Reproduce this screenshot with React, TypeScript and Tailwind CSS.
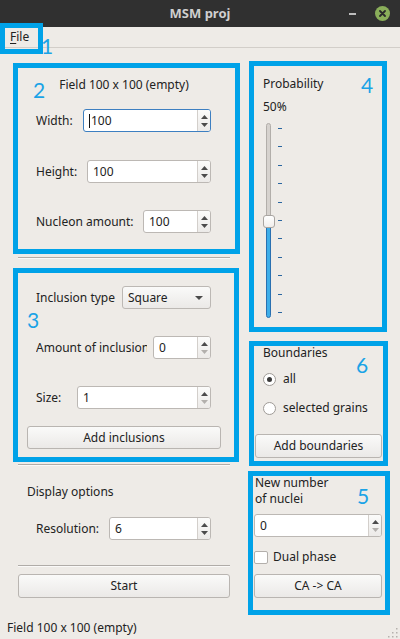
import React from "react";

const FONT = { fontFamily: '"Noto Sans", "DejaVu Sans", sans-serif' };

function Arrows({ downDisabled }: { downDisabled?: boolean }) {
  return (
    <div className="flex w-[13px] flex-col items-center justify-center gap-[4px] border-l border-[#d3cfcb] bg-gradient-to-b from-[#fbfbfa] to-[#eceae8] rounded-r-[2px]">
      <svg width="7" height="4" viewBox="0 0 7 4">
        <polygon points="0,4 3.5,0 7,4" fill="#4b4b4b" />
      </svg>
      <svg width="7" height="4" viewBox="0 0 7 4">
        <polygon points="0,0 7,0 3.5,4" fill={downDisabled ? "#b3b0ad" : "#4b4b4b"} />
      </svg>
    </div>
  );
}

function Spin({
  value,
  w,
  focused,
  downDisabled,
}: {
  value: string;
  w: string;
  focused?: boolean;
  downDisabled?: boolean;
}) {
  return (
    <div
      className={`flex h-[23px] ${w} shrink-0 rounded-[3px] border bg-white ${
        focused ? "border-[#3d7fc1]" : "border-[#bcb8b4]"
      }`}
    >
      <div className="flex flex-1 items-center pl-[5px] text-[12px] text-[#222]">
        {focused && <div className="mr-[1px] h-[14px] w-[1px] bg-[#111]" />}
        {value}
      </div>
      <Arrows downDisabled={downDisabled} />
    </div>
  );
}

function Button({ label, cls }: { label: string; cls: string }) {
  return (
    <div
      className={`flex items-center justify-center rounded-[3px] border border-[#b9b5b1] bg-gradient-to-b from-[#fafaf9] to-[#ebe9e7] text-[12px] text-[#222] ${cls}`}
    >
      {label}
    </div>
  );
}

function Sep({ cls }: { cls: string }) {
  return <div className={`h-[2px] border-t border-[#b0aca8] border-b border-b-[#faf9f8] ${cls}`} />;
}

function Box({ cls }: { cls: string }) {
  return <div className={`pointer-events-none absolute border-[5px] border-[#00a2e8] ${cls}`} />;
}

function Digit({ d, cls }: { d: string; cls: string }) {
  return (
    <div
      className={`pointer-events-none absolute text-[21px] leading-none font-normal text-[#1ba3e6] ${cls}`}
      style={{ fontFamily: 'Lato, "Open Sans", sans-serif' }}
    >
      {d}
    </div>
  );
}

export default function App() {
  const ticks = Array.from({ length: 11 }, (_, i) => i);
  return (
    <div
      className="relative flex h-[639px] w-[400px] flex-col overflow-hidden bg-[#eeebe7] text-[12px] text-[#222]"
      style={FONT}
    >
      {/* Title bar */}
      <div className="relative flex h-[27px] shrink-0 items-center justify-center bg-[#303030]">
        <span className="text-[13px] font-bold text-[#cfcfcf]">MSM proj</span>
        <div className="absolute right-[10px] top-0 flex h-[27px] items-center gap-[19px]">
          <div className="h-[2px] w-[7px] bg-[#bdbdbd]" />
          <div className="flex h-[15px] w-[15px] items-center justify-center rounded-full bg-[#8aae5a]">
            <svg width="7" height="7" viewBox="0 0 7 7">
              <path d="M1 1 L6 6 M6 1 L1 6" stroke="#2a2a2a" strokeWidth="1.8" strokeLinecap="round" />
            </svg>
          </div>
        </div>
      </div>

      {/* Menu bar */}
      <div className="flex h-[21px] shrink-0 items-center border-b border-[#d2cec9] pl-[10px]">
        <span>
          <span className="underline underline-offset-2">F</span>ile
        </span>
      </div>

      {/* Main */}
      <div className="flex flex-1">
        {/* Left column */}
        <div className="ml-[18px] flex w-[212px] flex-col">
          <div className="mt-[29px] flex h-[16px] items-center justify-center">Field 100 x 100 (empty)</div>
          <div className="mt-[16px] flex items-center pl-[18px] pr-[19px]">
            <span>Width:</span>
            <div className="ml-auto">
              <Spin value="100" w="w-[128px]" focused />
            </div>
          </div>
          <div className="mt-[28px] flex items-center pl-[18px] pr-[19px]">
            <span>Height:</span>
            <div className="ml-auto">
              <Spin value="100" w="w-[124px]" />
            </div>
          </div>
          <div className="mt-[27px] flex items-center pl-[18px] pr-[19px]">
            <span>Nucleon amount:</span>
            <div className="ml-auto">
              <Spin value="100" w="w-[68px]" />
            </div>
          </div>
          <Sep cls="mt-[24px]" />
          <div className="mt-[27px] flex items-center pl-[18px] pr-[19px]">
            <span>Inclusion type</span>
            <div className="ml-auto flex h-[23px] w-[89px] items-center rounded-[3px] border border-[#bcb8b4] bg-gradient-to-b from-[#fafaf9] to-[#ebe9e7] pl-[5px] pr-[7px]">
              <span>Square</span>
              <svg className="ml-auto" width="8" height="4" viewBox="0 0 8 4">
                <polygon points="0,0 8,0 4,4" fill="#4b4b4b" />
              </svg>
            </div>
          </div>
          <div className="mt-[27px] flex items-center pl-[18px] pr-[19px]">
            <span className="w-[111px] overflow-hidden whitespace-nowrap">Amount of inclusions</span>
            <div className="ml-auto">
              <Spin value="0" w="w-[58px]" downDisabled />
            </div>
          </div>
          <div className="mt-[27px] flex items-center pl-[18px] pr-[19px]">
            <span>Size:</span>
            <div className="ml-auto">
              <Spin value="1" w="w-[134px]" downDisabled />
            </div>
          </div>
          <div className="mt-[17px] px-[9px]">
            <Button label="Add inclusions" cls="h-[23px]" />
          </div>
          <Sep cls="mt-[15px]" />
          <div className="mt-[18px] flex h-[16px] items-center pl-[9px]">Display options</div>
          <div className="mt-[17px] flex items-center pl-[18px] pr-[19px]">
            <span>Resolution:</span>
            <div className="ml-auto">
              <Spin value="6" w="w-[102px]" />
            </div>
          </div>
          <Sep cls="mt-[25px]" />
          <Button label="Start" cls="mt-[7px] h-[24px]" />
        </div>

        {/* Right column */}
        <div className="ml-[24px] flex w-[128px] flex-col">
          <div className="mt-[28px] flex h-[16px] items-center pl-[9px]">Probability</div>
          <div className="mt-[7px] flex h-[16px] items-center pl-[9px]">50%</div>
          <div className="relative mt-[6px] h-[199px]">
            <div className="absolute left-[12px] top-[2px] h-[93px] w-[5px] rounded-t-[3px] border border-[#b2aeaa] bg-[#d6d2ce]" />
            <div className="absolute left-[12px] top-[100px] h-[97px] w-[5px] rounded-b-[3px] border border-[#2a70b0] bg-[#3daee9]" />
            <div className="absolute left-[9px] top-[94px] h-[13px] w-[12px] rounded-[3px] border border-[#a9a5a1] bg-gradient-to-b from-white to-[#f0eeec]" />
            {ticks.map((i) => (
              <div
                key={i}
                className="absolute left-[24px] h-[1px] w-[4px] bg-[#2a66a0]"
                style={{ top: 7 + i * 18.4 }}
              />
            ))}
          </div>
          <div className="mt-[25px] flex h-[16px] items-center pl-[9px]">Boundaries</div>
          <div className="mt-[10px] flex h-[16px] items-center gap-[7px] pl-[9px]">
            <div className="flex h-[13px] w-[13px] items-center justify-center rounded-full border border-[#9f9b97] bg-white">
              <div className="h-[5px] w-[5px] rounded-full bg-[#3a3a3a]" />
            </div>
            <span>all</span>
          </div>
          <div className="mt-[13px] flex h-[16px] items-center gap-[7px] pl-[9px]">
            <div className="h-[13px] w-[13px] rounded-full border border-[#9f9b97] bg-white" />
            <span>selected grains</span>
          </div>
          <div className="mt-[18px] pl-[1px]">
            <Button label="Add boundaries" cls="h-[24px]" />
          </div>
          <div className="mt-[17px] pl-[1px] leading-[16px]">
            New number
            <br />
            of nuclei
          </div>
          <div className="mt-[7px]">
            <Spin value="0" w="w-[128px]" downDisabled />
          </div>
          <div className="mt-[12px] flex h-[16px] items-center gap-[5px]">
            <div className="h-[13px] w-[14px] rounded-[2px] border border-[#b3afab] bg-white" />
            <span>Dual phase</span>
          </div>
          <Button label="CA -> CA" cls="mt-[9px] h-[24px]" />
        </div>
      </div>

      {/* Status bar */}
      <div className="relative flex h-[22px] shrink-0 items-center pl-[7px]">
        Field 100 x 100 (empty)
        <svg className="absolute bottom-[1px] right-[2px]" width="12" height="12" viewBox="0 0 12 12">
          {[
            [10, 2],
            [10, 6],
            [6, 6],
            [10, 10],
            [6, 10],
            [2, 10],
          ].map(([x, y], i) => (
            <rect key={i} x={x} y={y} width="1.5" height="1.5" fill="#b5b1ad" />
          ))}
        </svg>
      </div>

      {/* Annotation overlays */}
      <Box cls="left-0 top-[23px] h-[31px] w-[43px]" />
      <Box cls="left-[13px] top-[63px] h-[191px] w-[227px]" />
      <Box cls="left-[13px] top-[268px] h-[194px] w-[226px]" />
      <Box cls="left-[249px] top-[61px] h-[271px] w-[138px]" />
      <Box cls="left-[249px] top-[341px] h-[125px] w-[139px]" />
      <Box cls="left-[248px] top-[471px] h-[144px] w-[142px]" />
      <Digit d="1" cls="left-[41px] top-[35px]" />
      <Digit d="2" cls="left-[33px] top-[79px]" />
      <Digit d="3" cls="left-[27px] top-[309px]" />
      <Digit d="4" cls="left-[361px] top-[74px]" />
      <Digit d="6" cls="left-[356px] top-[354px]" />
      <Digit d="5" cls="left-[357px] top-[485px]" />
    </div>
  );
}
